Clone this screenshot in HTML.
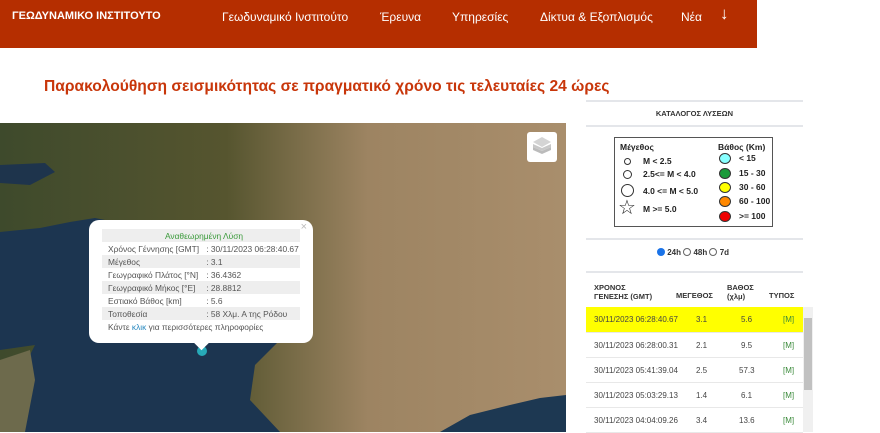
<!DOCTYPE html>
<html><head><meta charset="utf-8"><style>
*{margin:0;padding:0;box-sizing:border-box}
body{width:880px;height:432px;overflow:hidden;background:#fff;font-family:"Liberation Sans",sans-serif;position:relative}
.hdr{position:absolute;left:0;top:0;width:757px;height:48px;background:#b52e00;color:#fff}
.hdr span{position:absolute;top:10px;font-size:12px}
.title{position:absolute;left:44px;top:78px;color:#c8360a;font-size:15.6px;font-weight:bold;letter-spacing:0}
.map{position:absolute;left:0;top:123px;width:566px;height:309px;overflow:hidden}
.pop{position:absolute;left:89px;top:97px;width:224px;height:123px;background:#fff;border-radius:10px;font-size:8.4px;color:#555}
.pop table{position:absolute;left:13px;top:9px;width:198px;border-collapse:collapse}
.pop td{height:13px;padding:0 0 0 6px;white-space:nowrap}
.pop tr:nth-child(odd) td{background:#eee}
.line{position:absolute;left:586px;width:217px;height:2px;background:#e4e6ea}
.leg{position:absolute;left:614px;top:137px;width:159px;height:90px;border:1px solid #555;font-size:8.5px;font-weight:bold;color:#222}
.leg div{position:absolute;white-space:nowrap}
.c{border:1px solid #333;border-radius:50%;position:absolute}
.th{position:absolute;font-size:7.5px;font-weight:bold;color:#333;line-height:9px}
.row{position:absolute;left:586px;width:217px;height:25px;border-bottom:1px solid #e8e8e8;font-size:8px;color:#444}
.row span{position:absolute;top:8px}
</style></head><body>
<div class="hdr">
<span style="left:12px;font-weight:bold;font-size:11px">ΓΕΩΔΥΝΑΜΙΚΟ ΙΝΣΤΙΤΟΥΤΟ</span>
<span style="left:222px">Γεωδυναμικό Ινστιτούτο</span>
<span style="left:380px">Έρευνα</span>
<span style="left:452px">Υπηρεσίες</span>
<span style="left:540px">Δίκτυα &amp; Εξοπλισμός</span>
<span style="left:681px">Νέα</span>
<span style="left:720px;top:4px;font-size:17px">↓</span>
</div>
<div class="title">Παρακολούθηση σεισμικότητας σε πραγματικό χρόνο τις τελευταίες 24 ώρες</div>
<div class="map">
<svg width="566" height="309" viewBox="0 123 566 309">
<defs><linearGradient id="g" x1="0" x2="1" y1="0" y2="0"><stop offset="0" stop-color="#3e4a2c"/><stop offset=".4" stop-color="#56552f"/><stop offset=".65" stop-color="#9d8462"/><stop offset="1" stop-color="#a98e6c"/></linearGradient></defs>
<rect x="0" y="123" width="566" height="309" fill="url(#g)"/>
<polygon points="0,165 45,163 55,172 30,185 0,183" fill="#1e344c"/>
<polygon points="0,232 40,228 70,222 95,218 130,225 170,232 230,240 270,258 285,300 280,340 255,365 250,400 280,432 0,432 0,375 30,355 35,345 0,350" fill="#1c3550"/>
<polygon points="0,360 30,350 35,380 25,432 0,432" fill="#6d6a4c"/>
<polygon points="440,432 470,415 510,405 540,398 566,395 566,432" fill="#1d3852"/>
<circle cx="202" cy="351" r="5" fill="#27aab8"/>
</svg>
<div style="position:absolute;left:527px;top:9px;width:30px;height:30px;background:#fff;border-radius:3px">
<svg width="30" height="30" viewBox="0 0 30 30"><path d="M15 19 L24 15 L24 18 L15 22 L6 18 L6 15Z" fill="#bbb"/><path d="M15 16 L24 12 L24 15 L15 19 L6 15 L6 12Z" fill="#c8c8c8"/><path d="M15 5 L24 10 L15 15 L6 10Z" fill="#d4d4d4"/></svg></div>
<div class="pop">
<span style="position:absolute;right:6px;top:1px;color:#bbb;font-size:11px">×</span>
<table>
<tr><td colspan="2" style="text-align:center;color:#3a9a3a">Αναθεωρημένη Λύση</td></tr>
<tr><td>Χρόνος Γέννησης [GMT]</td><td>: 30/11/2023 06:28:40.67</td></tr>
<tr><td>Μέγεθος</td><td>: 3.1</td></tr>
<tr><td>Γεωγραφικό Πλάτος [°N]</td><td>: 36.4362</td></tr>
<tr><td>Γεωγραφικό Μήκος [°E]</td><td>: 28.8812</td></tr>
<tr><td>Εστιακό Βάθος [km]</td><td>: 5.6</td></tr>
<tr><td>Τοποθεσία</td><td>: 58 Χλμ. Α της Ρόδου</td></tr>
<tr><td colspan="2" style="background:#fff">Κάντε <span style="color:#2a8ac0">κλικ</span> για περισσότερες πληροφορίες</td></tr>
</table>
<div style="position:absolute;left:107px;bottom:-5px;width:11px;height:11px;background:#fff;transform:rotate(45deg)"></div>
</div>
</div>
<div class="line" style="top:100px"></div>
<div style="position:absolute;left:586px;width:217px;top:109px;text-align:center;font-size:7.5px;color:#333;font-weight:bold">ΚΑΤΑΛΟΓΟΣ ΛΥΣΕΩΝ</div>
<div class="line" style="top:125px"></div>
<div class="leg">
<div style="left:5px;top:4px">Μέγεθος</div>
<div class="c" style="left:9px;top:20px;width:7px;height:7px"></div><div style="left:28px;top:18px">M &lt; 2.5</div>
<div class="c" style="left:8px;top:32px;width:9px;height:9px"></div><div style="left:28px;top:31px">2.5&lt;= M &lt; 4.0</div>
<div class="c" style="left:6px;top:46px;width:13px;height:13px"></div><div style="left:28px;top:48px">4.0 &lt;= M &lt; 5.0</div>
<div style="left:3px;top:60px;font-size:20px;font-weight:normal;line-height:20px">☆</div><div style="left:28px;top:66px">M &gt;= 5.0</div>
<div style="left:103px;top:4px">Βάθος (Km)</div>
<div class="c" style="left:104px;top:15px;width:12px;height:11px;background:#8ff"></div><div style="left:124px;top:15px">&lt; 15</div>
<div class="c" style="left:104px;top:30px;width:12px;height:11px;background:#1a9a3a"></div><div style="left:124px;top:30px">15 - 30</div>
<div class="c" style="left:104px;top:44px;width:12px;height:11px;background:#ff0"></div><div style="left:124px;top:44px">30 - 60</div>
<div class="c" style="left:104px;top:58px;width:12px;height:11px;background:#f80"></div><div style="left:124px;top:58px">60 - 100</div>
<div class="c" style="left:104px;top:73px;width:12px;height:11px;background:#e00"></div><div style="left:124px;top:73px">&gt;= 100</div>
</div>
<div class="line" style="top:238px"></div>
<div style="position:absolute;left:657px;top:248px;font-size:8px;font-weight:bold;color:#333"><span style="display:inline-block;width:8px;height:8px;border-radius:50%;background:#1a73e8;vertical-align:-1px"></span> 24h <span style="display:inline-block;width:8px;height:8px;border-radius:50%;border:1px solid #666;vertical-align:-1px"></span> 48h <span style="display:inline-block;width:8px;height:8px;border-radius:50%;border:1px solid #666;vertical-align:-1px"></span> 7d</div>
<div class="line" style="top:271px"></div>
<div class="th" style="left:594px;top:283px">ΧΡΟΝΟΣ<br>ΓΕΝΕΣΗΣ (GMT)</div>
<div class="th" style="left:676px;top:291px">ΜΕΓΕΘΟΣ</div>
<div class="th" style="left:727px;top:283px">ΒΑΘΟΣ<br>(χλμ)</div>
<div class="th" style="left:769px;top:291px">ΤΥΠΟΣ</div>
<div style="position:absolute;left:803px;top:307px;width:10px;height:125px;background:#f0f0f0"></div>
<div style="position:absolute;left:804px;top:318px;width:8px;height:72px;background:#c1c1c1"></div>
<div class="row" style="top:307px;background:#ff0;height:26px"><span style="left:8px">30/11/2023 06:28:40.67</span><span style="left:110px">3.1</span><span style="left:155px">5.6</span><span style="left:197px;color:#3a8a3a">[M]</span></div>
<div class="row" style="top:333px"><span style="left:8px">30/11/2023 06:28:00.31</span><span style="left:110px">2.1</span><span style="left:155px">9.5</span><span style="left:197px;color:#3a8a3a">[M]</span></div>
<div class="row" style="top:358px"><span style="left:8px">30/11/2023 05:41:39.04</span><span style="left:110px">2.5</span><span style="left:153px">57.3</span><span style="left:197px;color:#3a8a3a">[M]</span></div>
<div class="row" style="top:383px"><span style="left:8px">30/11/2023 05:03:29.13</span><span style="left:110px">1.4</span><span style="left:155px">6.1</span><span style="left:197px;color:#3a8a3a">[M]</span></div>
<div class="row" style="top:408px"><span style="left:8px">30/11/2023 04:04:09.26</span><span style="left:110px">3.4</span><span style="left:153px">13.6</span><span style="left:197px;color:#3a8a3a">[M]</span></div>
</body></html>
